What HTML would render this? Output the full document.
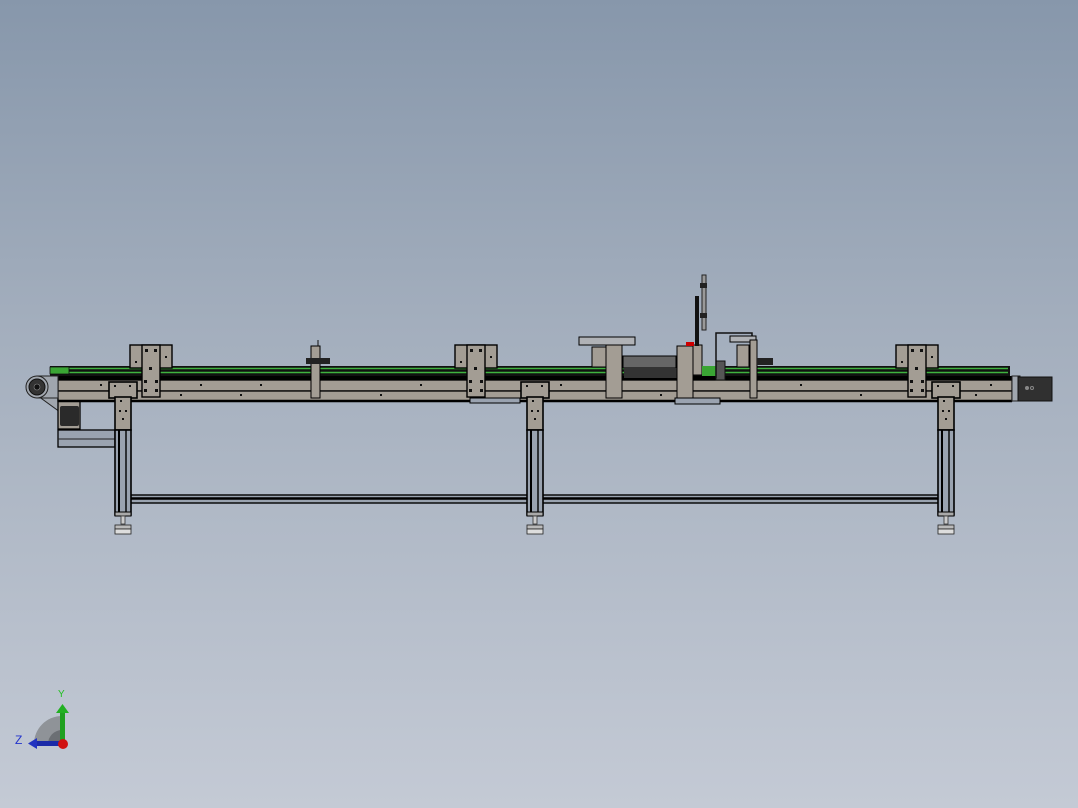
<!DOCTYPE html>
<html><head><meta charset="utf-8"><style>
html,body{margin:0;padding:0;width:1078px;height:808px;overflow:hidden}
body{background:linear-gradient(to bottom,#8797ab 0%,#a3aebd 40%,#c4cad5 100%)}
svg{position:absolute;left:0;top:0}
text{font-family:"Liberation Sans",sans-serif}
</style></head><body>
<svg width="1078" height="808" viewBox="0 0 1078 808">
<defs>
<g id="leg">
  <rect x="-14" y="382" width="28" height="16" fill="#a39d94" stroke="#000" stroke-width="1.6"/>
  <rect x="-8" y="397" width="16" height="33" fill="#a39d94" stroke="#000" stroke-width="1.6"/>
  <rect x="-8" y="430" width="16" height="85" fill="#9aa3b0" stroke="#000" stroke-width="1.6"/>
  <line x1="-4" y1="430" x2="-4" y2="515" stroke="#000" stroke-width="2"/>
  <line x1="3" y1="430" x2="3" y2="515" stroke="#000" stroke-width="1.4"/>
  <rect x="-8" y="512" width="16" height="4" fill="#aaa" stroke="#000"/>
  <rect x="-2" y="516" width="4" height="8" fill="#ccc" stroke="#333" stroke-width=".8"/>
  <rect x="-8" y="525" width="16" height="4" fill="#bbb" stroke="#222" stroke-width=".8"/>
  <rect x="-8" y="529" width="16" height="5" fill="#ddd" stroke="#222" stroke-width=".8"/>
  <g fill="#111"><rect x="-9" y="385" width="2" height="2"/><rect x="6" y="385" width="2" height="2"/><rect x="-3" y="400" width="2" height="2"/><rect x="-4" y="410" width="2" height="2"/><rect x="2" y="410" width="2" height="2"/><rect x="-1" y="418" width="2" height="2"/></g>
</g>
<g id="upr">
  <rect x="-21" y="345" width="42" height="23" fill="#a39d94" stroke="#000" stroke-width="1.4"/>
  <rect x="-9" y="345" width="18" height="52" fill="#a39d94" stroke="#000" stroke-width="1.4"/>
  <g fill="#111"><rect x="-6" y="349" width="3" height="3"/><rect x="3" y="349" width="3" height="3"/><rect x="-16" y="361" width="2" height="2"/><rect x="14" y="356" width="2" height="2"/><rect x="-2" y="367" width="3" height="3"/><rect x="-7" y="380" width="3" height="3"/><rect x="4" y="380" width="3" height="3"/><rect x="-7" y="389" width="3" height="3"/><rect x="4" y="389" width="3" height="3"/></g>
</g>
</defs>

<!-- crossbar -->
<rect x="130" y="495" width="810" height="8" fill="#9aa3b0" stroke="#000" stroke-width="1.4"/>
<line x1="130" y1="498.5" x2="940" y2="498.5" stroke="#000" stroke-width="2.5"/>

<!-- left motor/bracket -->
<polygon points="38,396 60,396 60,412" fill="#a0a6ae" stroke="#222"/>
<rect x="58" y="430" width="57" height="17" fill="#9aa3b0" stroke="#000" stroke-width="1.3"/>
<line x1="58" y1="439" x2="115" y2="439" stroke="#222"/>
<rect x="58" y="400" width="22" height="29" fill="#a39d94" stroke="#000" stroke-width="1.3"/>
<rect x="60" y="406" width="19" height="20" rx="2" fill="#2a2a2a"/>

<!-- belt -->
<rect x="50" y="366" width="960" height="11" fill="#111"/>
<line x1="50" y1="368.5" x2="1008" y2="368.5" stroke="#3fb23f" stroke-width="1.5"/>
<line x1="50" y1="372.5" x2="1008" y2="372.5" stroke="#3fb23f" stroke-width="1.5"/>
<rect x="50" y="367" width="19" height="7" fill="#3aa534" stroke="#111" stroke-width=".8"/>
<rect x="50" y="376" width="962" height="4" fill="#000"/>

<!-- beam -->
<rect x="58" y="380" width="954" height="11" fill="#a39d94" stroke="#000" stroke-width="1.3"/>
<rect x="58" y="391" width="954" height="10" fill="#a39d94" stroke="#000" stroke-width="1.3"/>
<line x1="58" y1="401" x2="1012" y2="401" stroke="#000" stroke-width="2.5"/>
<g fill="#111">
<rect x="100" y="384" width="2" height="2"/><rect x="200" y="384" width="2" height="2"/><rect x="260" y="384" width="2" height="2"/><rect x="420" y="384" width="2" height="2"/><rect x="560" y="384" width="2" height="2"/><rect x="800" y="384" width="2" height="2"/><rect x="990" y="384" width="2" height="2"/>
<rect x="180" y="394" width="2" height="2"/><rect x="240" y="394" width="2" height="2"/><rect x="380" y="394" width="2" height="2"/><rect x="660" y="394" width="2" height="2"/><rect x="860" y="394" width="2" height="2"/><rect x="975" y="394" width="2" height="2"/>
</g>

<!-- pulley -->
<path d="M37,376 L58,376 L58,398 L37,398 Z" fill="#a0a6ae" stroke="#222"/>
<circle cx="37" cy="387" r="11" fill="#a0a6ae" stroke="#222"/>
<circle cx="37" cy="387" r="8" fill="#333" stroke="#111"/>
<circle cx="37" cy="387" r="3" fill="#111" stroke="#888" stroke-width=".6"/>

<!-- right motor -->
<rect x="1012" y="376" width="8" height="25" fill="#a0a6ae" stroke="#222"/>
<rect x="1018" y="377" width="34" height="24" fill="#303030" stroke="#111"/>
<circle cx="1027" cy="388" r="2" fill="#888"/><circle cx="1032" cy="388" r="1.5" fill="none" stroke="#888"/>

<!-- legs -->
<use href="#leg" transform="translate(123,0)"/>
<use href="#leg" transform="translate(535,0)"/>
<use href="#leg" transform="translate(946,0)"/>

<!-- uprights -->
<use href="#upr" transform="translate(151,0)"/>
<use href="#upr" transform="translate(476,0)"/>
<use href="#upr" transform="translate(917,0)"/>

<!-- small post -->
<rect x="311" y="346" width="9" height="52" fill="#a39d94" stroke="#000"/>
<rect x="306" y="358" width="24" height="6" fill="#222"/>
<line x1="318" y1="340" x2="318" y2="346" stroke="#111"/>

<!-- middle mechanism -->
<rect x="579" y="337" width="56" height="8" fill="#b0b2b6" stroke="#000"/>
<rect x="606" y="345" width="16" height="53" fill="#a39d94" stroke="#000"/>
<rect x="592" y="347" width="14" height="20" fill="#a39d94" stroke="#000"/>
<rect x="623" y="356" width="53" height="12" fill="#666" stroke="#000"/>
<rect x="624" y="368" width="54" height="10" fill="#333"/>
<rect x="677" y="346" width="16" height="52" fill="#a39d94" stroke="#000"/>
<rect x="693" y="345" width="9" height="30" fill="#a39d94" stroke="#000"/>
<rect x="695" y="296" width="4" height="50" fill="#111"/>
<rect x="702" y="275" width="4" height="55" fill="#999" stroke="#222"/>
<rect x="700" y="283" width="7" height="5" fill="#222"/><rect x="700" y="313" width="7" height="5" fill="#222"/>
<rect x="686" y="342" width="8" height="4" fill="#c00"/>
<rect x="702" y="366" width="14" height="10" fill="#3aa534"/>
<rect x="716" y="361" width="9" height="19" fill="#555" stroke="#111"/>
<path d="M716,378 L716,333 L752,333 L752,340" fill="none" stroke="#111" stroke-width="1.5"/>
<rect x="730" y="336" width="26" height="6" fill="#b0b2b6" stroke="#000"/>
<rect x="737" y="345" width="12" height="22" fill="#a39d94" stroke="#000"/>
<rect x="750" y="340" width="7" height="58" fill="#a39d94" stroke="#000"/>
<rect x="757" y="358" width="16" height="7" fill="#222"/>
<rect x="675" y="398" width="45" height="6" fill="#9aa3b0" stroke="#000"/>
<rect x="470" y="398" width="50" height="5" fill="#9aa3b0" stroke="#000"/>

<!-- axis triad -->
<path d="M34,744 A28,28 0 0 1 62,716 L62,744 Z" fill="#8f9398"/>
<path d="M48,744 A14,14 0 0 1 62,730 L62,744 Z" fill="#6b6f74"/>
<rect x="60" y="712" width="5" height="30" fill="#1fa01f"/>
<polygon points="56,713 62.5,704 69,713" fill="#22b022"/>
<rect x="36" y="741" width="26" height="5" fill="#1b2aa8"/>
<polygon points="37,738 28,743.5 37,749" fill="#2233c0"/>
<circle cx="63" cy="744" r="5" fill="#d01010"/>
<text x="58" y="697" font-size="10" fill="#22c022">Y</text>
<text x="15" y="744" font-size="12" fill="#2233cc">Z</text>
</svg>
</body></html>
